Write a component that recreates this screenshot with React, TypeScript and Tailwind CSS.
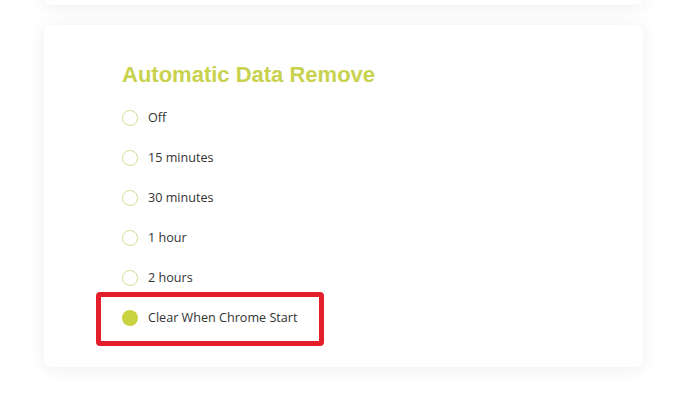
import React from "react";

const options = ["Off", "15 minutes", "30 minutes", "1 hour", "2 hours", "Clear When Chrome Start"];

export default function App() {
  return (
    <div className="w-[688px] h-[401px] bg-white overflow-hidden relative">
      <div className="absolute left-[44px] right-[45px] top-[-60px] h-[65px] rounded-lg bg-white shadow-[0_2px_18px_rgba(0,0,0,0.07)]" />
      <div className="pt-[25px] px-[44px]">
        <div className="w-[599px] h-[342px] rounded-lg bg-white shadow-[0_2px_18px_rgba(0,0,0,0.07)] pl-[78px] pt-[36px] relative">
          <h2 className="text-[22px] leading-[28px] font-bold text-[#c8d24e]" style={{ fontFamily: '"Liberation Sans", Arial, sans-serif' }}>
            Automatic Data Remove
          </h2>
          <div className="mt-[9px] flex flex-col">
            {options.map((o, i) => {
              const sel = i === options.length - 1;
              return (
                <div key={o} className="h-[40px] flex items-center gap-[10px]" style={{ fontFamily: '"Open Sans", sans-serif' }}>
                  {sel ? (
                    <span className="w-[16px] h-[16px] rounded-full bg-[#c9d33f] shrink-0" />
                  ) : (
                    <span className="w-[16px] h-[16px] rounded-full border border-[#d8dc98] bg-white shrink-0" />
                  )}
                  <span className="text-[12.6px] text-[#333]">{o}</span>
                </div>
              );
            })}
          </div>
          <div className="absolute left-[52px] top-[267px] w-[228px] h-[54px] border-[5px] border-[#e41e2a] rounded-[4px]" />
        </div>
      </div>
    </div>
  );
}
